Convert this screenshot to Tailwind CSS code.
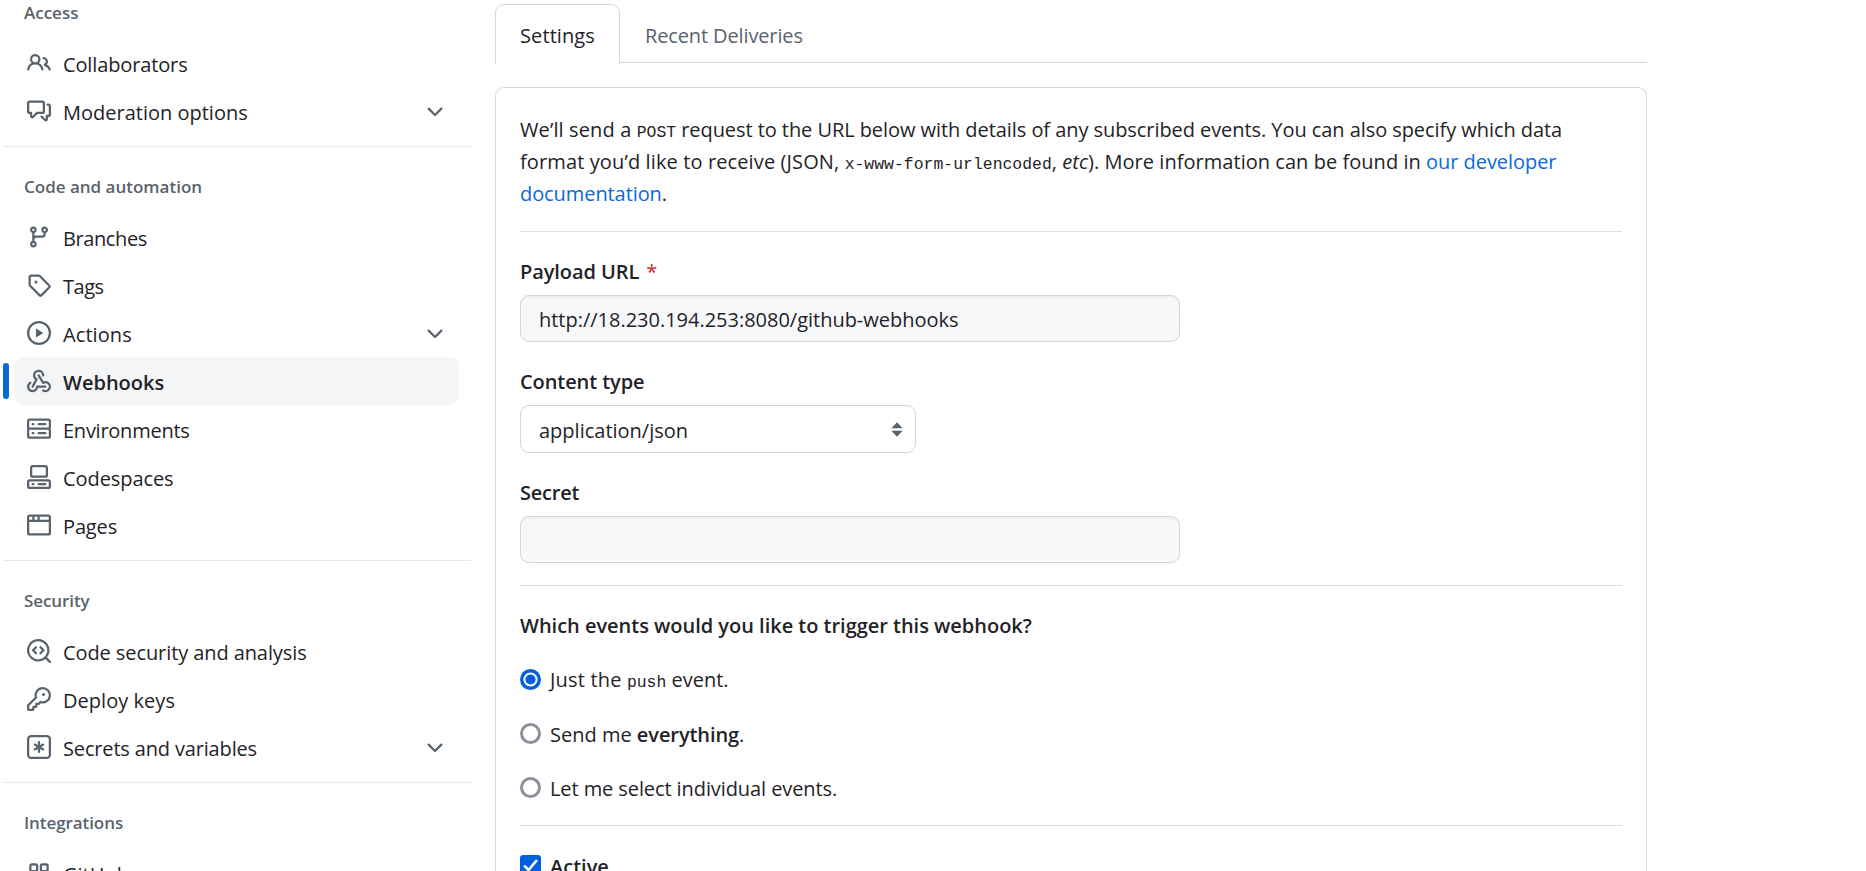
<!DOCTYPE html>
<html lang="en">
<head>
<meta charset="utf-8">
<title>Webhook settings</title>
<script src="https://cdn.jsdelivr.net/npm/@tailwindcss/browser@4"></script>
</head>
<body class="bg-white">
<div class="flex h-[871px] w-[1866px] overflow-hidden bg-white font-['Open_Sans',sans-serif] text-[20px] leading-8 text-[#1f2328]">

  <!-- Sidebar -->
  <nav class="ml-[3px] w-[468px] shrink-0">
    <h3 class="mb-[15px] flex h-6 items-center pl-[21px] pt-px text-[17px] font-semibold text-[#59636e]">Access</h3>
    <ul class="pl-3 pr-3">
      <li class="flex h-12 items-start rounded-[9px] px-3 pt-3">
        <svg class="size-6 shrink-0 fill-[#59636e]" viewBox="0 0 16 16"><path d="M2 5.5a3.5 3.5 0 1 1 5.898 2.549 5.508 5.508 0 0 1 3.034 4.084.75.75 0 1 1-1.482.235 4 4 0 0 0-7.9 0 .75.75 0 0 1-1.482-.236A5.507 5.507 0 0 1 3.102 8.05 3.493 3.493 0 0 1 2 5.5ZM11 4a3.001 3.001 0 0 1 2.22 5.018 5.01 5.01 0 0 1 2.56 3.012.749.749 0 0 1-.885.954.752.752 0 0 1-.549-.514 3.507 3.507 0 0 0-2.522-2.372.75.75 0 0 1-.574-.73v-.352a.75.75 0 0 1 .416-.672A1.5 1.5 0 0 0 11 5.5.75.75 0 0 1 11 4Zm-5.5-.5a2 2 0 1 0-.001 3.999A2 2 0 0 0 5.5 3.5Z"/></svg>
        <span class="-mt-[2px] ml-3 tracking-[-0.13px]">Collaborators</span>
      </li>
      <li class="flex h-12 items-start rounded-[9px] px-3 pt-3">
        <svg class="size-6 shrink-0 fill-[#59636e]" viewBox="0 0 16 16"><path d="M1.75 1h8.5c.966 0 1.75.784 1.75 1.75v5.5A1.75 1.75 0 0 1 10.25 10H7.061l-2.574 2.573A1.458 1.458 0 0 1 2 11.543V10h-.25A1.75 1.75 0 0 1 0 8.25v-5.5C0 1.784.784 1 1.75 1ZM1.5 2.75v5.5c0 .138.112.25.25.25h1a.75.75 0 0 1 .75.75v2.19l2.72-2.72a.749.749 0 0 1 .53-.22h3.5a.25.25 0 0 0 .25-.25v-5.5a.25.25 0 0 0-.25-.25h-8.5a.25.25 0 0 0-.25.25Zm13 2a.25.25 0 0 0-.25-.25h-.5a.75.75 0 0 1 0-1.5h.5c.966 0 1.75.784 1.75 1.75v5.5A1.75 1.75 0 0 1 14.25 12H14v1.543a1.458 1.458 0 0 1-2.487 1.03L9.22 12.28a.749.749 0 0 1 .326-1.275.749.749 0 0 1 .734.215l2.22 2.22v-2.19a.75.75 0 0 1 .75-.75h1a.25.25 0 0 0 .25-.25Z"/></svg>
        <span class="-mt-[2px] ml-3 grow">Moderation options</span>
        <svg class="mt-px size-6 shrink-0 fill-[#59636e]" viewBox="0 0 16 16"><path d="M12.78 5.22a.749.749 0 0 1 0 1.06l-4.25 4.25a.749.749 0 0 1-1.06 0L3.22 6.28a.749.749 0 1 1 1.06-1.06L8 8.939l3.72-3.719a.749.749 0 0 1 1.06 0Z"/></svg>
      </li>
    </ul>
    <hr class="mt-[11px] border-[#e6e8eb]">

    <h3 class="mb-[15px] mt-[27px] flex h-6 items-center pl-[21px] pt-px text-[17px] font-semibold text-[#59636e]">Code and automation</h3>
    <ul class="pl-3 pr-3">
      <li class="flex h-12 items-start rounded-[9px] px-3 pt-3">
        <svg class="size-6 shrink-0 fill-[#59636e]" viewBox="0 0 16 16"><path d="M9.5 3.25a2.25 2.25 0 1 1 3 2.122V6A2.5 2.5 0 0 1 10 8.5H6a1 1 0 0 0-1 1v1.128a2.251 2.251 0 1 1-1.5 0V5.372a2.25 2.25 0 1 1 1.5 0v1.836A2.493 2.493 0 0 1 6 7h4a1 1 0 0 0 1-1v-.628A2.25 2.25 0 0 1 9.5 3.25Zm-6 0a.75.75 0 1 0 1.5 0 .75.75 0 0 0-1.5 0Zm8.25-.75a.75.75 0 1 0 0 1.5.75.75 0 0 0 0-1.5ZM4.25 12a.75.75 0 1 0 0 1.5.75.75 0 0 0 0-1.5Z"/></svg>
        <span class="-mt-[2px] ml-3 tracking-[-0.4px]">Branches</span>
      </li>
      <li class="flex h-12 items-start rounded-[9px] px-3 pt-3">
        <svg class="size-6 shrink-0 fill-[#59636e]" viewBox="0 0 16 16"><path d="M1 7.775V2.75C1 1.784 1.784 1 2.75 1h5.025c.464 0 .91.184 1.238.513l6.25 6.25a1.75 1.75 0 0 1 0 2.474l-5.026 5.026a1.75 1.75 0 0 1-2.474 0l-6.25-6.25A1.752 1.752 0 0 1 1 7.775Zm1.5 0c0 .066.026.13.073.177l6.25 6.25a.25.25 0 0 0 .354 0l5.025-5.025a.25.25 0 0 0 0-.354l-6.25-6.25a.25.25 0 0 0-.177-.073H2.75a.25.25 0 0 0-.25.25ZM6 5a1 1 0 1 1 0 2 1 1 0 0 1 0-2Z"/></svg>
        <span class="-mt-[2px] ml-3 tracking-[-0.5px]">Tags</span>
      </li>
      <li class="flex h-12 items-start rounded-[9px] px-3 pt-3">
        <svg class="size-6 shrink-0 fill-[#59636e]" viewBox="0 0 16 16"><path d="M8 0a8 8 0 1 1 0 16A8 8 0 0 1 8 0ZM1.5 8a6.5 6.5 0 1 0 13 0 6.5 6.5 0 0 0-13 0Zm4.879-2.773 4.264 2.559a.25.25 0 0 1 0 .428l-4.264 2.559A.25.25 0 0 1 6 10.559V5.442a.25.25 0 0 1 .379-.215Z"/></svg>
        <span class="-mt-[2px] ml-3 grow tracking-[0.08px]">Actions</span>
        <svg class="mt-px size-6 shrink-0 fill-[#59636e]" viewBox="0 0 16 16"><path d="M12.78 5.22a.749.749 0 0 1 0 1.06l-4.25 4.25a.749.749 0 0 1-1.06 0L3.22 6.28a.749.749 0 1 1 1.06-1.06L8 8.939l3.72-3.719a.749.749 0 0 1 1.06 0Z"/></svg>
      </li>
      <li class="relative flex h-12 items-start rounded-[9px] bg-[#f3f5f7] px-3 pt-3">
        <span class="absolute -left-3 top-1.5 h-9 w-1.5 rounded-[3px] bg-[#0969da]"></span>
        <svg class="size-6 shrink-0 fill-[#59636e]" viewBox="0 0 16 16"><path d="M5.5 4.25a2.25 2.25 0 0 1 4.5 0 .75.75 0 0 0 1.5 0 3.75 3.75 0 1 0-6.14 2.889l-2.272 4.258a.75.75 0 0 0 1.324.706L7 7.25a.75.75 0 0 0-.309-1.015A2.25 2.25 0 0 1 5.5 4.25Z"/><path d="M7.364 3.607a.75.75 0 0 1 1.03.257l2.608 4.349a3.75 3.75 0 1 1-.628 6.785.75.75 0 0 1 .752-1.299 2.25 2.25 0 1 0-.033-3.88.75.75 0 0 1-1.03-.256L7.107 4.636a.75.75 0 0 1 .257-1.03Z"/><path d="M2.9 8.776A.75.75 0 0 1 2.625 9.8 2.25 2.25 0 1 0 6 11.75a.75.75 0 0 1 .75-.751h5.5a.75.75 0 0 1 0 1.5H7.425a3.751 3.751 0 1 1-5.55-3.998.75.75 0 0 1 1.024.274Z"/></svg>
        <span class="-mt-[2px] ml-3 font-semibold">Webhooks</span>
      </li>
      <li class="flex h-12 items-start rounded-[9px] px-3 pt-3">
        <svg class="size-6 shrink-0 fill-[#59636e]" viewBox="0 0 16 16"><path d="M1.75 1h12.5c.966 0 1.75.784 1.75 1.75v4c0 .372-.116.717-.314 1 .198.283.314.628.314 1v4a1.75 1.75 0 0 1-1.75 1.75H1.75A1.75 1.75 0 0 1 0 12.75v-4c0-.358.109-.707.314-1a1.739 1.739 0 0 1-.314-1v-4C0 1.784.784 1 1.75 1ZM1.5 2.75v4c0 .138.112.25.25.25h12.5a.25.25 0 0 0 .25-.25v-4a.25.25 0 0 0-.25-.25H1.75a.25.25 0 0 0-.25.25Zm.25 5.75a.25.25 0 0 0-.25.25v4c0 .138.112.25.25.25h12.5a.25.25 0 0 0 .25-.25v-4a.25.25 0 0 0-.25-.25ZM7 4.75A.75.75 0 0 1 7.75 4h4.5a.75.75 0 0 1 0 1.5h-4.5A.75.75 0 0 1 7 4.75ZM7.75 10h4.5a.75.75 0 0 1 0 1.5h-4.5a.75.75 0 0 1 0-1.5ZM3 4.75A.75.75 0 0 1 3.75 4h.5a.75.75 0 0 1 0 1.5h-.5A.75.75 0 0 1 3 4.75ZM3.75 10h.5a.75.75 0 0 1 0 1.5h-.5a.75.75 0 0 1 0-1.5Z"/></svg>
        <span class="-mt-[2px] ml-3 tracking-[-0.25px]">Environments</span>
      </li>
      <li class="flex h-12 items-start rounded-[9px] px-3 pt-3">
        <svg class="size-6 shrink-0 fill-[#59636e]" viewBox="0 0 16 16"><path d="M0 11.25c0-.966.784-1.75 1.75-1.75h12.5c.966 0 1.75.784 1.75 1.75v3A1.75 1.75 0 0 1 14.25 16H1.75A1.75 1.75 0 0 1 0 14.25Zm2-9.5C2 .784 2.784 0 3.75 0h8.5C13.216 0 14 .784 14 1.75v5a1.75 1.75 0 0 1-1.75 1.75h-8.5A1.75 1.75 0 0 1 2 6.75Zm1.75-.25a.25.25 0 0 0-.25.25v5c0 .138.112.25.25.25h8.5a.25.25 0 0 0 .25-.25v-5a.25.25 0 0 0-.25-.25Zm-2 9.5a.25.25 0 0 0-.25.25v3c0 .138.112.25.25.25h12.5a.25.25 0 0 0 .25-.25v-3a.25.25 0 0 0-.25-.25Z"/><path d="M7 12.75a.75.75 0 0 1 .75-.75h4.5a.75.75 0 0 1 0 1.5h-4.5a.75.75 0 0 1-.75-.75Zm-4 0a.75.75 0 0 1 .75-.75h.5a.75.75 0 0 1 0 1.5h-.5a.75.75 0 0 1-.75-.75Z"/></svg>
        <span class="-mt-[2px] ml-3 tracking-[-0.08px]">Codespaces</span>
      </li>
      <li class="flex h-12 items-start rounded-[9px] px-3 pt-3">
        <svg class="size-6 shrink-0 fill-[#59636e]" viewBox="0 0 16 16"><path d="M0 2.75C0 1.784.784 1 1.75 1h12.5c.966 0 1.75.784 1.75 1.75v10.5A1.75 1.75 0 0 1 14.25 15H1.75A1.75 1.75 0 0 1 0 13.25ZM14.5 6h-13v7.25c0 .138.112.25.25.25h12.5a.25.25 0 0 0 .25-.25Zm-6-3.5v2h6V2.75a.25.25 0 0 0-.25-.25ZM5 2.5v2h2v-2Zm-3.25 0a.25.25 0 0 0-.25.25V4.5h2v-2Z"/></svg>
        <span class="-mt-[2px] ml-3 tracking-[-0.15px]">Pages</span>
      </li>
    </ul>
    <hr class="mt-[11px] border-[#e6e8eb]">

    <h3 class="mb-[15px] mt-[27px] flex h-6 items-center pl-[21px] pt-px text-[17px] font-semibold tracking-[-0.08px] text-[#59636e]">Security</h3>
    <ul class="pl-3 pr-3">
      <li class="flex h-12 items-start rounded-[9px] px-3 pt-3">
        <svg class="size-6 shrink-0 fill-[#59636e]" viewBox="0 0 16 16"><path d="M8.47 4.97a.75.75 0 0 0 0 1.06L9.94 7.5 8.47 8.97a.75.75 0 1 0 1.06 1.06l2-2a.75.75 0 0 0 0-1.06l-2-2a.75.75 0 0 0-1.06 0ZM6.53 6.03a.75.75 0 0 0-1.06-1.06l-2 2a.75.75 0 0 0 0 1.06l2 2a.75.75 0 1 0 1.06-1.06L5.06 7.5l1.47-1.47Z"/><path d="M12.246 13.307a7.501 7.501 0 1 1 1.06-1.06l2.474 2.473a.749.749 0 0 1-.326 1.275.749.749 0 0 1-.734-.215ZM1.5 7.5a6.002 6.002 0 0 0 3.608 5.504 6.002 6.002 0 0 0 6.486-1.117.748.748 0 0 1 .292-.293A6 6 0 1 0 1.5 7.5Z"/></svg>
        <span class="-mt-[2px] ml-3 tracking-[-0.09px]">Code security and analysis</span>
      </li>
      <li class="flex h-12 items-start rounded-[9px] px-3 pt-3">
        <svg class="size-6 shrink-0 fill-[#59636e]" viewBox="0 0 16 16"><path d="M10.5 0a5.499 5.499 0 1 1-1.288 10.848l-.932.932a.749.749 0 0 1-.53.22H7v.75a.749.749 0 0 1-.22.53l-.5.5a.749.749 0 0 1-.53.22H5v.75a.749.749 0 0 1-.22.53l-.5.5a.749.749 0 0 1-.53.22h-2A1.75 1.75 0 0 1 0 14.25v-2c0-.199.079-.389.22-.53l4.932-4.932A5.5 5.5 0 0 1 10.5 0Zm-4 5.5c-.001.431.069.86.205 1.269a.75.75 0 0 1-.181.768L1.5 12.56v1.69c0 .138.112.25.25.25h1.69l.06-.06v-1.19a.75.75 0 0 1 .75-.75h1.19l.06-.06v-1.19a.75.75 0 0 1 .75-.75h1.19l1.023-1.025a.75.75 0 0 1 .768-.18A4 4 0 1 0 6.5 5.5ZM11 6a1 1 0 1 1 0-2 1 1 0 0 1 0 2Z"/></svg>
        <span class="-mt-[2px] ml-3 tracking-[0.04px]">Deploy keys</span>
      </li>
      <li class="flex h-12 items-start rounded-[9px] px-3 pt-3">
        <svg class="size-6 shrink-0 fill-[#59636e]" viewBox="0 0 16 16"><path d="M0 2.75A2.75 2.75 0 0 1 2.75 0h10.5A2.75 2.75 0 0 1 16 2.75v10.5A2.75 2.75 0 0 1 13.25 16H2.75A2.75 2.75 0 0 1 0 13.25ZM2.75 1.5c-.69 0-1.25.56-1.25 1.25v10.5c0 .69.56 1.25 1.25 1.25h10.5c.69 0 1.25-.56 1.25-1.25V2.75c0-.69-.56-1.25-1.25-1.25Z"/><path d="M8 4a.75.75 0 0 1 .75.75V6.7l1.69-.975a.75.75 0 0 1 .75 1.3L9.5 8l1.69.976a.75.75 0 0 1-.75 1.298L8.75 9.3v1.951a.75.75 0 0 1-1.5 0V9.299l-1.69.976a.75.75 0 0 1-.75-1.3L6.5 8l-1.69-.975a.75.75 0 0 1 .75-1.3l1.69.976V4.75A.75.75 0 0 1 8 4Z"/></svg>
        <span class="-mt-[2px] ml-3 grow tracking-[-0.16px]">Secrets and variables</span>
        <svg class="mt-px size-6 shrink-0 fill-[#59636e]" viewBox="0 0 16 16"><path d="M12.78 5.22a.749.749 0 0 1 0 1.06l-4.25 4.25a.749.749 0 0 1-1.06 0L3.22 6.28a.749.749 0 1 1 1.06-1.06L8 8.939l3.72-3.719a.749.749 0 0 1 1.06 0Z"/></svg>
      </li>
    </ul>
    <hr class="mt-[11px] border-[#e6e8eb]">

    <h3 class="mb-[15px] mt-[27px] flex h-6 items-center pl-[21px] pt-px text-[17px] font-semibold tracking-[-0.08px] text-[#59636e]">Integrations</h3>
    <ul class="pl-3 pr-3">
      <li class="flex h-12 items-start rounded-[9px] px-3 pt-3">
        <svg class="size-6 shrink-0 fill-none stroke-[#59636e] stroke-[1.5]" viewBox="0 0 16 16"><rect x="2.25" y="2.25" width="4.5" height="4.5" rx="1"/><rect x="9.25" y="2.25" width="4.5" height="4.5" rx="1"/><rect x="2.25" y="9.25" width="4.5" height="4.5" rx="1"/><rect x="9.25" y="9.25" width="4.5" height="4.5" rx="1"/></svg>
        <span class="-mt-[2px] ml-3">GitHub</span>
      </li>
    </ul>
  </nav>

  <!-- Main column -->
  <main class="ml-6 w-[1152px] shrink-0 pt-1">
    <div class="flex h-[59px] items-start border-b border-[#d0d7de]">
      <div class="h-[60px] w-[125px] rounded-t-[9px] border border-b-0 border-[#d0d7de] bg-white pl-6 pt-[15px] tracking-[0.1px]">Settings</div>
      <div class="pl-[25px] pt-4 tracking-[-0.13px] text-[#59636e]">Recent Deliveries</div>
    </div>

    <div class="mt-6 h-[800px] rounded-t-[9px] border border-b-0 border-[#d0d7de] px-6 pt-[26px]">
      <div class="whitespace-nowrap">
        <p class="h-8 tracking-[-0.065px]"><span class="tracking-[0.12px]">We’ll send a </span><code class="font-['Liberation_Mono',monospace] text-[16.4px] tracking-normal">POST</code> request to the URL below with details of any subscribed events. You can also specify which data</p>
        <p class="h-8 tracking-[0.04px]"><span class="tracking-[0.12px]">format you’d like to receive (JSON, </span><code class="font-['Liberation_Mono',monospace] text-[16.4px] tracking-[0.03px]">x-www-form-urlencoded</code>, <em>etc</em>). More information can be found in <a class="tracking-[-0.05px] text-[#0969da]">our developer</a></p>
        <p class="h-8 tracking-[-0.08px]"><a class="text-[#0969da]">documentation</a>.</p>
      </div>
      <hr class="mt-[21px] border-[#d8dee4]">

      <label class="mt-6 flex h-8 font-semibold tracking-[-0.08px]">Payload URL<span class="ml-[7px] font-normal text-[#cf222e]">*</span></label>
      <div class="mt-[7px] h-[47px] w-[660px] rounded-[9px] border border-[#d0d7de] bg-[#f6f8fa] pl-[18px] pt-2 tracking-[-0.015px] shadow-[inset_0_2px_0_rgba(208,215,222,0.25)]">http://18.230.194.253:8080/github-webhooks</div>

      <label class="mt-6 block h-8 font-semibold tracking-[-0.08px]">Content type</label>
      <div class="mt-[7px] flex h-12 w-[396px] items-start justify-between rounded-[9px] border border-[#d0d7de] bg-white pl-[18px] pr-3 pt-[9px] shadow-[inset_0_2px_0_rgba(208,215,222,0.12)]">
        <span>application/json</span>
        <svg class="mt-[7px] h-[15px] w-3 fill-[#59636e]" viewBox="0 0 12 15"><path d="M6 0.3 11.6 6.2H0.4ZM6 14.7 11.6 8.8H0.4Z"/></svg>
      </div>

      <label class="mt-6 block h-8 font-semibold tracking-[-0.2px]">Secret</label>
      <div class="mt-[7px] h-[47px] w-[660px] rounded-[9px] border border-[#d0d7de] bg-[#f6f8fa] shadow-[inset_0_2px_0_rgba(208,215,222,0.25)]"></div>
      <hr class="mt-[22px] border-[#d8dee4]">

      <h4 class="mt-6 h-8 font-semibold tracking-[-0.02px]">Which events would you like to trigger this webhook?</h4>
      <div class="mt-[22px] flex flex-col gap-[22px]">
        <div class="flex h-8 gap-[9px]">
          <svg class="mt-[5px] size-[21px] fill-[#0060df]" viewBox="0 0 21 21"><circle cx="10.5" cy="10.5" r="8.8" class="fill-none stroke-[#0060df] stroke-[3.4]"/><circle cx="10.5" cy="10.5" r="5.1"/></svg>
          <p><span class="tracking-[0.18px]">Just the </span><code class="font-['Liberation_Mono',monospace] text-[16.4px]">push</code> event.</p>
        </div>
        <div class="flex h-8 gap-[9px]">
          <span class="mt-[5px] size-[21px] rounded-full border-[3px] border-[#8f8f9d]"></span>
          <p class="pt-px">Send me <b class="font-semibold tracking-[-0.08px]">everything</b>.</p>
        </div>
        <div class="flex h-8 gap-[9px]">
          <span class="mt-[5px] size-[21px] rounded-full border-[3px] border-[#8f8f9d]"></span>
          <p class="pt-px tracking-[-0.09px]">Let me select individual events.</p>
        </div>
      </div>
      <hr class="mt-[21px] border-[#d8dee4]">

      <div class="mt-6 flex h-8 gap-[9px]">
        <span class="mt-[5px] flex size-[21px] items-center justify-center rounded-[3px] bg-[#0060df]"><svg class="size-[21px] fill-none stroke-white stroke-[2.6]" stroke-linecap="round" stroke-linejoin="round" viewBox="0 0 21 21"><path d="M4.8 11.3 8.6 15 16.2 5.8"/></svg></span>
        <b class="pt-px font-semibold">Active</b>
      </div>
    </div>
  </main>
</div>
</body>
</html>
